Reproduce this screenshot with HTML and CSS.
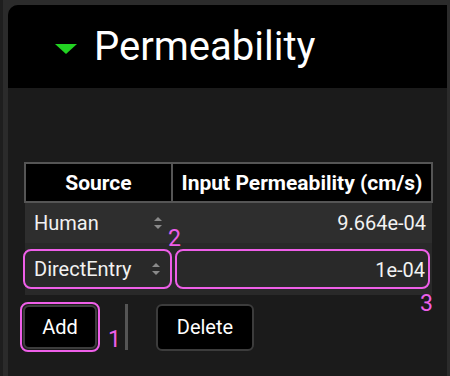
FILE: index.html
```html
<!DOCTYPE html>
<html lang="en">
<head>
    <meta charset="UTF-8">
    <meta name="viewport" content="width=device-width, initial-scale=1.0">
    <title>Permeability</title>
    <link rel="stylesheet" href="styles.css">
</head>
<body>
    <div class="panel">
        <div class="panel-head">
            <span class="caret"></span>
            <h1>Permeability</h1>
        </div>
        <div class="panel-body">
            <div class="grid-wrap">
                <table class="grid">
                    <thead>
                        <tr>
                            <th class="col-src">Source</th>
                            <th>Input Permeability (cm/s)</th>
                        </tr>
                    </thead>
                    <tbody>
                        <tr class="row">
                            <td class="col-src"><div class="combo">Human<span class="spin"></span></div></td>
                            <td class="num">9.664e-04</td>
                        </tr>
                        <tr class="row row-edit">
                            <td class="col-src"><div class="combo hl">DirectEntry<span class="spin"></span></div></td>
                            <td class="num"><div class="field hl">1e-04</div></td>
                        </tr>
                    </tbody>
                </table>
                <span class="mark mark-2">2</span>
                <span class="mark mark-3">3</span>
            </div>
            <div class="actions">
                <div class="hl-btn"><button>Add</button></div>
                <span class="mark-inline">1</span>
                <span class="sep"></span>
                <button class="btn-delete">Delete</button>
            </div>
        </div>
    </div>
</body>
</html>
```

FILE: styles.css
```css
html, body {
    margin: 0;
    height: 100%;
}

body {
    background-color: #2b2b2b;
    border-left: 3px solid #1e1e1e;
    padding: 5px 3px 0 5px;
    box-sizing: border-box;
    font-family: Roboto, "Liberation Sans", sans-serif;
    color: #f2f2f2;
    overflow: hidden;
}

.panel {
    height: 100%;
    display: flex;
    flex-direction: column;
    border-top-left-radius: 10px;
    overflow: hidden;
    background-color: #1b1b1b;
}

.panel-head {
    height: 83px;
    background-color: #000;
    display: flex;
    align-items: center;
    padding-left: 47px;
}

.caret {
    width: 0;
    height: 0;
    border-left: 11px solid transparent;
    border-right: 11px solid transparent;
    border-top: 10px solid #22d322;
    margin-right: 17px;
    margin-top: 4px;
}

h1 {
    margin: 0;
    font-size: 40px;
    font-weight: 400;
    color: #fff;
}

.panel-body {
    flex: 1;
    padding: 74px 0 0 16px;
}

.grid-wrap {
    position: relative;
    width: 409px;
}

.grid {
    width: 409px;
    border-collapse: collapse;
    font-size: 20px;
}

.grid th {
    background-color: #000;
    border: 2px solid #555;
    height: 37px;
    padding: 0;
    font-size: 21px;
    font-weight: 700;
    color: #fff;
    white-space: nowrap;
}

.grid .col-src {
    width: 145px;
}

.grid td {
    padding: 0;
    background-color: #2e2e2e;
}

.row td {
    height: 40px;
}

.row-edit td {
    height: 52px;
    background-color: #292929;
}

.combo {
    display: flex;
    align-items: center;
    justify-content: space-between;
    padding: 0 8px 0 9px;
    height: 40px;
    box-sizing: border-box;
}

.spin {
    width: 8px;
    height: 12px;
    position: relative;
    margin-right: 2px;
}

.spin::before,
.spin::after {
    content: "";
    position: absolute;
    left: 0;
    border-left: 4px solid transparent;
    border-right: 4px solid transparent;
}

.spin::before {
    top: 0;
    border-bottom: 4px solid #8a8a8a;
}

.spin::after {
    bottom: 0;
    border-top: 4px solid #8a8a8a;
}

.num {
    text-align: right;
    padding-right: 6px !important;
}

.field {
    height: 40px;
    line-height: 38px;
    box-sizing: border-box;
    padding-right: 3px;
    margin: 0 -4px 0 3px;
}

.hl {
    border: 2px solid #ee5fe8;
    border-radius: 8px;
}

.combo.hl {
    margin-left: -2px;
    padding-left: 9px;
}

.mark {
    position: absolute;
    color: #ee5fe8;
    font-size: 23px;
    line-height: 1;
}

.mark-2 {
    left: 144px;
    top: 65px;
}

.mark-3 {
    left: 396px;
    top: 130px;
}

.actions {
    display: flex;
    align-items: center;
    margin-top: 7px;
    margin-left: -4px;
}

.hl-btn {
    border: 2px solid #ee5fe8;
    border-radius: 8px;
    padding: 1px;
}

button {
    background-color: #000;
    color: #fff;
    border: 2px solid #3c3c3c;
    border-radius: 6px;
    font-family: Roboto, "Liberation Sans", sans-serif;
    font-size: 20px;
    height: 44px;
    padding: 0;
}

.hl-btn button {
    width: 74px;
}

.mark-inline {
    color: #ee5fe8;
    font-size: 23px;
    align-self: flex-end;
    margin: 0 4px 0 8px;
    line-height: 24px;
}

.sep {
    width: 3px;
    height: 46px;
    background-color: #555;
    margin-right: 28px;
}

.btn-delete {
    width: 98px;
    height: 47px;
}
```
